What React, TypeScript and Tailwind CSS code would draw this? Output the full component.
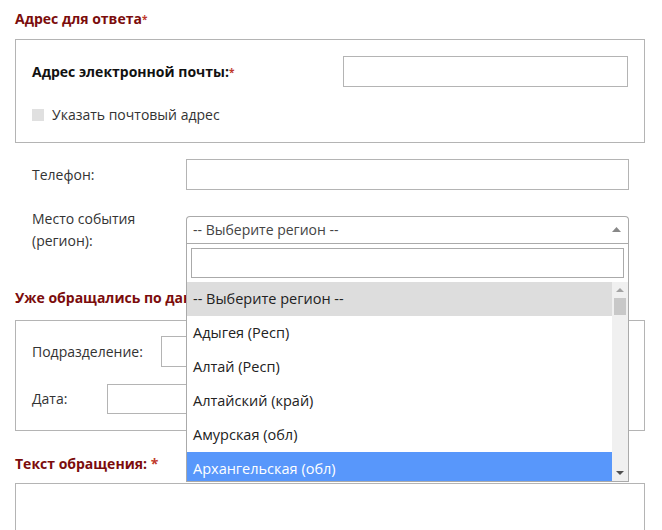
import React from 'react';

const regions = [
  '-- Выберите регион --',
  'Адыгея (Респ)',
  'Алтай (Респ)',
  'Алтайский (край)',
  'Амурская (обл)',
  'Архангельская (обл)',
];

const heading = 'text-[14px] font-bold leading-5 text-[#7b0c0c]';
const field = 'border border-[#b4b4b4] bg-white';

const RegionSelect: React.FC = () => {
  return (
    <div className="relative w-[443px]">
      <div className="flex h-[27px] items-center justify-between rounded-t-[4px] border border-b-0 border-[#aaaaaa] bg-white pl-[6px] pr-[7px] text-[#444]">
        <span>-- Выберите регион --</span>
        <svg width="9" height="5" viewBox="0 0 9 5" className="mb-[1px]">
          <path d="M0 5 L4.5 0 L9 5 Z" fill="#888" />
        </svg>
      </div>
      <div className="absolute left-0 top-full z-10 flex h-[239px] w-full flex-col border border-[#aaaaaa] bg-white">
        <div className="px-[4px] pb-[4px] pt-[4px]">
          <div className="h-[30px] w-[433px] border border-[#aaaaaa]" />
        </div>
        <div className="flex min-h-0 flex-1">
          <ul className="flex-1 overflow-hidden text-[14.5px]">
            {regions.map((r, i) => (
              <li
                key={r}
                className={
                  'flex h-[34px] shrink-0 items-center px-[6px] ' +
                  (i === 0 ? 'bg-[#dddddd] text-[#222]' : i === 5 ? 'bg-[#5897fb] text-white' : 'text-[#222]')
                }
              >
                {r}
              </li>
            ))}
          </ul>
          <div className="flex w-[16px] flex-col bg-[#f0f0f0]">
            <div className="flex h-[16px] items-center justify-center">
              <svg width="8" height="4" viewBox="0 0 8 4">
                <path d="M0 4 L4 0 L8 4 Z" fill="#a3a3a3" />
              </svg>
            </div>
            <div className="mx-[2px] h-[17px] bg-[#c8c8c8]" />
            <div className="flex-1" />
            <div className="flex h-[16px] items-center justify-center">
              <svg width="8" height="4" viewBox="0 0 8 4">
                <path d="M0 0 L8 0 L4 4 Z" fill="#505050" />
              </svg>
            </div>
          </div>
        </div>
      </div>
    </div>
  );
};

export default function App() {
  return (
    <div className="h-[530px] w-[662px] overflow-hidden bg-white pl-[15px] pt-[9px] font-['Open_Sans',sans-serif] text-[14px] leading-[22px] text-[#333]">
      <h2 className={heading}>
        Адрес для ответа<span className="text-[#c0392b] text-[10px] align-top">*</span>
      </h2>

      <div className={'mt-[10px] w-[630px] border border-[#b4b4b4] px-[16px] pt-[16px] pb-[16px]'}>
        <div className="flex items-center justify-between">
          <span className="font-bold text-[#111]">
            Адрес электронной почты:<span className="align-top text-[10px] text-[#c0392b]">*</span>
          </span>
          <div className={field + ' h-[31px] w-[285px]'} />
        </div>
        <label className="mt-[17px] flex items-center gap-[8px] text-[#333]">
          <span className="h-[12px] w-[12px] bg-[#e0e0e0]" />
          Указать почтовый адрес
        </label>
      </div>

      <div className="mt-[16px] flex items-center pl-[17px]">
        <span className="w-[154px]">Телефон:</span>
        <div className={field + ' h-[31px] w-[443px]'} />
      </div>

      <div className="mt-[18px] flex items-start pl-[17px]">
        <span className="w-[154px]">
          Место события
          <br />
          (регион):
        </span>
        <div className="pt-[8px]">
          <RegionSelect />
        </div>
      </div>

      <h2 className={heading + ' mt-[36px]'}>Уже обращались по данному вопросу</h2>

      <div className="mt-[12px] w-[630px] border border-[#b4b4b4] px-[16px] pt-[15px] pb-[16px]">
        <div className="flex items-center">
          <span className="w-[129px]">Подразделение:</span>
          <div className={field + ' h-[31px] w-[467px]'} />
        </div>
        <div className="mt-[17px] flex items-center">
          <span className="w-[75px]">Дата:</span>
          <div className={field + ' h-[30px] w-[200px]'} />
        </div>
      </div>

      <h2 className={heading + ' mt-[23px]'}>
        Текст обращения: <span className="text-[#c0392b]">*</span>
      </h2>

      <div className={field + ' mt-[9px] h-[120px] w-[630px]'} />
    </div>
  );
}
